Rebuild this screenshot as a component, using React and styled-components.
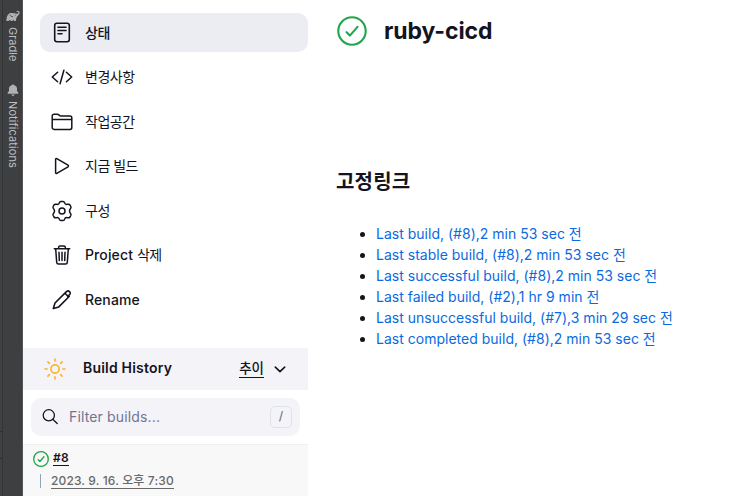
import React from "react";
import styled, { createGlobalStyle } from "styled-components";

const Global = createGlobalStyle`
  * { box-sizing: border-box; }
  body { margin: 0; background: #fff; overflow: hidden; }
  svg { display: block; flex: none; }
`;

const Page = styled.div`
  display: flex;
  width: 730px;
  height: 496px;
  color: #14141f;
  font-family: Inter, "Noto Sans CJK KR", sans-serif;
  font-size: 14px;
  font-weight: 500;
  white-space: nowrap;
`;

const Edge = styled.div`
  display: flex;
  flex-direction: column;
  width: 3px;
  background: #3f4142;
  border-right: 1px solid #323435;
`;

const EdgeSection = styled.div`
  height: ${(p) => p.$height}px;
  border-bottom: 1px solid #2d2f30;
`;

const ToolStrip = styled.aside`
  display: flex;
  flex-direction: column;
  align-items: center;
  width: 20px;
  padding-top: 10px;
  background: #3d3f41;
  border-right: 1px solid #525456;
`;

const ToolTab = styled.div`
  display: flex;
  flex-direction: column;
  align-items: center;
  gap: ${(p) => p.$gap}px;
  height: ${(p) => p.$height}px;
`;

const ToolName = styled.span`
  writing-mode: vertical-rl;
  font-size: 11px;
  font-weight: 400;
  line-height: 14px;
  letter-spacing: ${(p) => p.$spacing}px;
  color: #bcbec0;
`;

const Sidebar = styled.div`
  display: flex;
  flex-direction: column;
  width: 285px;
`;

const Tasks = styled.nav`
  display: flex;
  flex-direction: column;
  gap: 5.6px;
  height: 348px;
  padding: 13px 0 0 17px;
`;

const Task = styled.a`
  display: flex;
  align-items: center;
  gap: 12px;
  height: 39px;
  flex: none;
  padding-left: 11px;
  border-radius: 10px;
  background: ${(p) => (p.$active ? "#ecedf3" : "transparent")};
`;

const TaskLabel = styled.span`
  line-height: 20px;
  letter-spacing: 0.12px;
`;

const Hangul = styled.span`
  font-weight: ${(p) => p.$weight ?? 400};
  letter-spacing: ${(p) => p.$spacing ?? -0.5}px;
`;

const HistoryHeader = styled.div`
  display: flex;
  align-items: center;
  height: 42px;
  padding: 0 20px 0 21px;
  background: #f3f3f8;
`;

const HistoryTitle = styled.span`
  margin-left: 17px;
  line-height: 20px;
  padding-bottom: 2px;
  font-weight: 600;
  letter-spacing: 0.2px;
`;

const Trend = styled.a`
  margin: 0 8px 0 auto;
  height: 18px;
  line-height: 16px;
  font-size: 13.5px;
  border-bottom: 1px solid #14141f;
`;

const Search = styled.div`
  display: flex;
  align-items: center;
  height: 38px;
  margin: 8px;
  padding: 0 8px 0 10px;
  border-radius: 10px;
  background: #f3f3f8;
`;

const Placeholder = styled.span`
  flex: 1;
  margin-left: 10px;
  padding-bottom: 1px;
  color: #737390;
  font-weight: 400;
  letter-spacing: 0.15px;
`;

const Key = styled.kbd`
  display: flex;
  align-items: center;
  justify-content: center;
  width: 22px;
  height: 22px;
  border: 1px solid #e1e1e9;
  border-radius: 5px;
  color: #737390;
  font-family: Inter, sans-serif;
  font-size: 12px;
  line-height: 18px;
  padding-bottom: 2px;
`;

const Build = styled.div`
  flex: 1;
  padding: 5px 0 0 10px;
  background: #f8f8f8;
  border-top: 1px solid #f0f0f1;
`;

const BuildRow = styled.div`
  display: flex;
  align-items: center;
  gap: 4px;
  height: 18px;
`;

const BuildNumber = styled.a`
  height: 15px;
  margin-bottom: 1px;
  font-size: 12px;
  font-weight: 600;
  line-height: 14px;
  letter-spacing: 0.2px;
  border-bottom: 1px solid #14141f;
`;

const BuildDetail = styled.div`
  display: flex;
  align-items: center;
  margin: 6px 0 0 7px;
  padding-left: 10px;
  height: 14px;
  border-left: 1px solid #93a5b1;
`;

const BuildDate = styled.a`
  height: 15px;
  font-size: 12px;
  line-height: 13px;
  letter-spacing: 0.14px;
  color: #696969;
  border-bottom: 1px solid #696969;
`;

const Main = styled.main`
  padding: 16px 0 0 28px;
`;

const Headline = styled.header`
  display: flex;
  align-items: center;
  gap: 17px;
  height: 30px;
  padding-left: 1px;
`;

const Title = styled.h1`
  margin: 0;
  font-size: 23px;
  font-weight: 700;
  line-height: 28px;
  letter-spacing: -0.1px;
`;

const Subtitle = styled.h2`
  margin: 121px 0 0;
  height: 30px;
  font-size: 20px;
  font-weight: 600;
  line-height: 30px;
  letter-spacing: 0.2px;
`;

const Links = styled.ul`
  margin: 26px 0 0;
  padding-left: 40px;
`;

const LinkItem = styled.li`
  height: 21px;
  line-height: 21px;
`;

const Permalink = styled.a`
  color: #0b6ae0;
  font-weight: 400;
  letter-spacing: 0.01px;
`;

const Stroke = ({ children, size = 22, width = 1.5, color = "currentColor" }) => (
  <svg width={size} height={size} viewBox="0 0 22 22" fill="none" stroke={color}
    strokeWidth={width} strokeLinecap="round" strokeLinejoin="round">
    {children}
  </svg>
);

const DocumentIcon = () => (
  <Stroke width={1.6}>
    <rect x="3.7" y="1.3" width="14.6" height="18.4" rx="2.2" />
    <path d="M7 5.200h8M7 8.500h8M7 11.800h4" />
  </Stroke>
);
const CodeIcon = () => (
  <Stroke width={1.5}>
    <path d="M6.600 6.200 1.300 11l5.300 4.800M15.400 6.200l5.300 4.800-5.300 4.800M12.900 4.200 9.100 17.800" />
  </Stroke>
);
const FolderIcon = () => (
  <Stroke width={1.5}>
    <path d="M1.200 8.200V5.100c0-1.100.8-1.800 1.800-1.800h3.400c1.600 0 1.800 1.600 3.400 1.600H19c1.100 0 1.800.7 1.800 1.800v9.800c0 1.100-.7 1.900-1.800 1.900H3c-1.100 0-1.800-.8-1.800-1.900V8.400h19.600" />
  </Stroke>
);
const PlayIcon = () => (
  <Stroke width={1.5}>
    <path d="M4.600 4.300v13.400c0 .7.7 1 1.200.7l11.200-6.600c.6-.4.6-1.200 0-1.600L5.800 3.600c-.5-.3-1.200 0-1.200.7Z" />
  </Stroke>
);
const GearIcon = () => (
  <Stroke width={1.5}>
    <circle cx="11" cy="11" r="3" />
    <path d="M8.300 2.900C8.600 1.900 9.200 1.500 10 1.500h2c.8 0 1.400.4 1.700 1.400.3 1.100 1.400 1.700 2.500 1.400 1.500-.3 2.300-.1 2.800.7l.8 1.500c.4.800.3 1.500-.4 2.200-1.200 1.200-1.200 3.400 0 4.600.7.700.8 1.400.4 2.200l-.8 1.500c-.5.800-1.300 1-2.800.7-1.100-.3-2.200.3-2.500 1.400-.3 1-.9 1.400-1.700 1.400h-2c-.8 0-1.400-.4-1.700-1.400-.3-1.100-1.400-1.700-2.500-1.400-1.500.3-2.300.1-2.800-.7l-.8-1.500c-.4-.8-.3-1.500.4-2.200 1.200-1.200 1.200-3.400 0-4.600-.7-.7-.8-1.400-.4-2.200L3 5c.5-.8 1.300-1 2.800-.7 1.100.3 2.200-.3 2.500-1.400Z" />
  </Stroke>
);
const TrashIcon = () => (
  <Stroke width={1.5}>
    <path d="M3.300 4.800h15.400M4.700 5l1 13.400c.1 1 .8 1.600 1.700 1.600h7.200c.9 0 1.600-.6 1.700-1.600L17.300 5M7.700 4.600V3.300c0-.8.600-1.400 1.400-1.400h3.800c.8 0 1.400.6 1.400 1.400v1.300M8 8.200l.3 8.400M11 8.200v8.400M14 8.200l-.3 8.400" />
  </Stroke>
);
const PencilIcon = () => (
  <Stroke width={1.6}>
    <path d="M14.400 3.600 4 14 2.300 19.600 7.800 17.900 18.200 7.500M14.400 3.600l1.100-1c1-.9 2.100-.9 3 0 1 .9 1 2.100.1 3.100l-1.900 1.800M14 4.200l3.500 3.500" />
  </Stroke>
);
const CheckIcon = ({ size, width }) => (
  <svg width={size} height={size} viewBox="0 0 30 30" fill="none" stroke="#22a54a"
    strokeWidth={width} strokeLinecap="round" strokeLinejoin="round">
    <circle cx="15" cy="15" r="13.700" />
    <path d="m9.600 16.200 3.300 3.400 7.600-8.700" />
  </svg>
);
const SunIcon = () => (
  <Stroke color="#fdb42d" width={1.65}>
    <circle cx="11" cy="11" r="4.100" />
    <path d="M11 1v2.100M11 18.900V21M1 11h2.100M18.900 11H21M3.900 3.900l1.500 1.500M16.600 16.600l1.500 1.500M3.900 18.100l1.500-1.500M16.600 5.400l1.500-1.500" />
  </Stroke>
);
const SearchIcon = () => (
  <svg width="18" height="18" viewBox="0 0 18 18" fill="none" stroke="#14141f" strokeWidth="1.3" strokeLinecap="round">
    <circle cx="7.800" cy="7.300" r="5.600" />
    <path d="m12 11.500 4.200 4" />
  </svg>
);
const ChevronIcon = () => (
  <svg width="16" height="16" viewBox="0 0 16 16" fill="none" stroke="#14141f" strokeWidth="1.6" strokeLinecap="round" strokeLinejoin="round">
    <path d="m3.300 6.100 4.700 4.500 4.700-4.500" />
  </svg>
);
const ElephantIcon = () => (
  <svg width="14" height="12" viewBox="0 0 14 12">
    <path fill="#afb1b3" d="M.4 11C.3 7.400 1.400 4.800 3.200 3.600c1.500-1 3.100-.2 4.800-.3 1.300 0 2 .5 3 .4.9 0 1.300-.6 1.300-1.300 0-.6-.7-.9-1.300-.4l-.7-.6C11.400.2 13.600.9 13.600 2.700c0 1.400-1 2.200-1.800 3C10.600 6.900 10.200 8.100 9.900 11H8.200C8 9.600 6.600 9.600 6.400 11H4.800C4.500 9.600 3 9.600 2.800 11Z" />
    <path d="M4 4.500c.2 1.600 1.500 2.500 3 1.900M9.300 5.200h.7" fill="none" stroke="#3d3f41" strokeWidth=".8" />
  </svg>
);
const BellIcon = () => (
  <svg width="12" height="13" viewBox="0 0 12 13" fill="#afb1b3">
    <path d="M.7 9.700V8.600L2 7.100V4.600C2 2.800 3.100 1.500 4.700 1.200c.2-1 2.400-1 2.600 0C8.900 1.500 10 2.800 10 4.600v2.500l1.300 1.500v1.100ZM4.300 10.600h3.400c-.3 1.800-3.100 1.800-3.400 0Z" />
  </svg>
);

const tasks = [
  { hangul: "상태", Icon: DocumentIcon, active: true },
  { hangul: "변경사항", Icon: CodeIcon },
  { hangul: "작업공간", Icon: FolderIcon },
  { hangul: "지금 빌드", Icon: PlayIcon },
  { hangul: "구성", Icon: GearIcon },
  { latin: "Project ", hangul: "삭제", Icon: TrashIcon },
  { latin: "Rename", Icon: PencilIcon },
];

const links = [
  "Last build, (#8),2 min 53 sec ",
  "Last stable build, (#8),2 min 53 sec ",
  "Last successful build, (#8),2 min 53 sec ",
  "Last failed build, (#2),1 hr 9 min ",
  "Last unsuccessful build, (#7),3 min 29 sec ",
  "Last completed build, (#8),2 min 53 sec ",
];

export default function App() {
  return (
    <Page>
      <Global />
      <Edge>
        <EdgeSection $height={432} />
        <EdgeSection $height={27} />
      </Edge>
      <ToolStrip>
        <ToolTab $gap={5} $height={74}>
          <ElephantIcon />
          <ToolName $spacing={0}>Gradle</ToolName>
        </ToolTab>
        <ToolTab $gap={4} $height={90}>
          <BellIcon />
          <ToolName $spacing={0.1}>Notifications</ToolName>
        </ToolTab>
      </ToolStrip>
      <Sidebar>
        <Tasks>
          {tasks.map(({ latin, hangul, Icon, active }) => (
            <Task key={hangul ?? latin} $active={active}>
              <Icon />
              <TaskLabel>
                {latin}
                {hangul && <Hangul $weight={active ? 500 : 400}>{hangul}</Hangul>}
              </TaskLabel>
            </Task>
          ))}
        </Tasks>
        <HistoryHeader>
          <SunIcon />
          <HistoryTitle>Build History</HistoryTitle>
          <Trend>추이</Trend>
          <ChevronIcon />
        </HistoryHeader>
        <Search>
          <SearchIcon />
          <Placeholder>Filter builds...</Placeholder>
          <Key>/</Key>
        </Search>
        <Build>
          <BuildRow>
            <CheckIcon size={16} width={2.5} />
            <BuildNumber>#8</BuildNumber>
          </BuildRow>
          <BuildDetail>
            <BuildDate>2023. 9. 16. 오후 7:30</BuildDate>
          </BuildDetail>
        </Build>
      </Sidebar>
      <Main>
        <Headline>
          <CheckIcon size={30} width={2.1} />
          <Title>ruby-cicd</Title>
        </Headline>
        <Subtitle>고정링크</Subtitle>
        <Links>
          {links.map((text) => (
            <LinkItem key={text}>
              <Permalink>
                {text}
                <Hangul>전</Hangul>
              </Permalink>
            </LinkItem>
          ))}
        </Links>
      </Main>
    </Page>
  );
}
